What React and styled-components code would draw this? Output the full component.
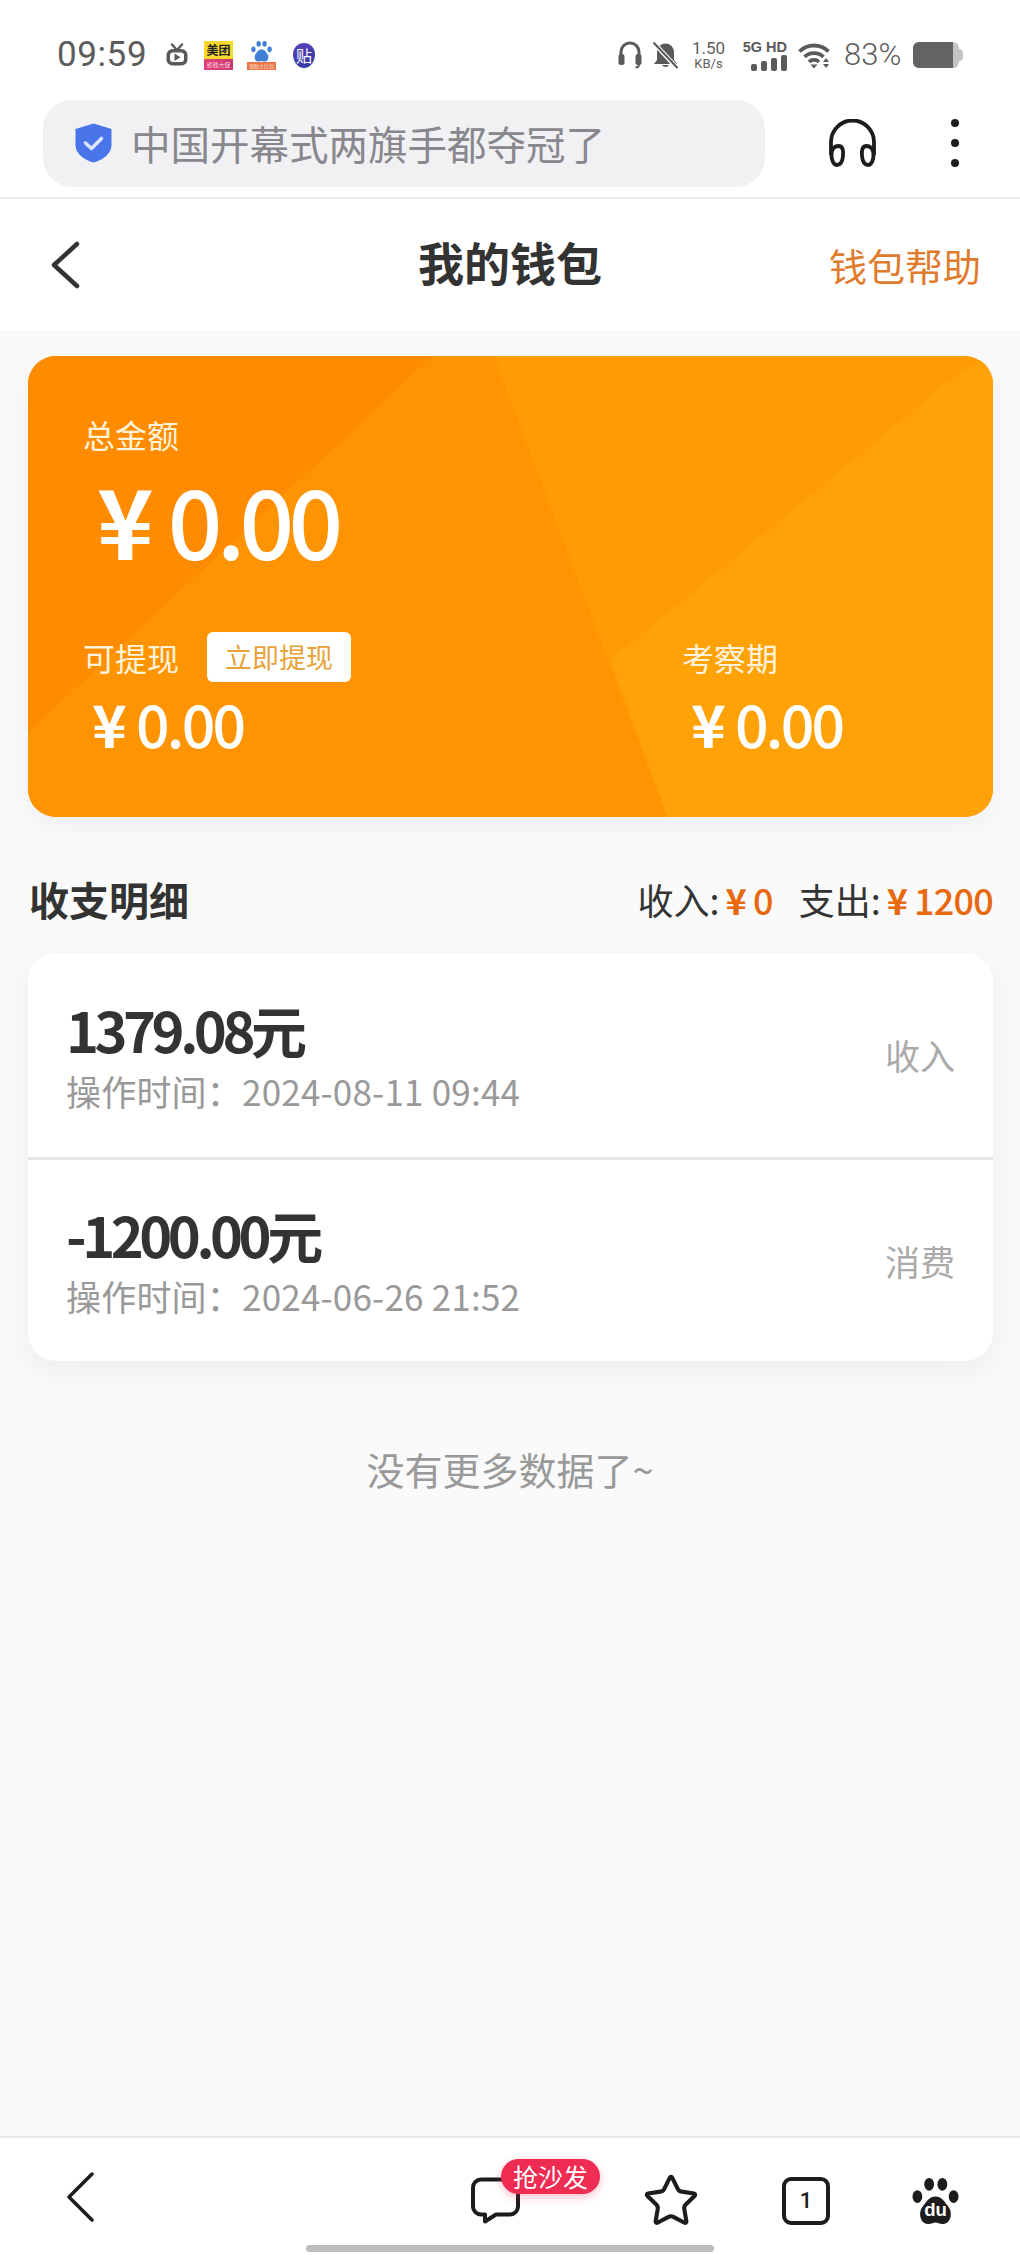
import React from 'react';
import styled, { createGlobalStyle } from 'styled-components';
import { Star } from 'lucide-react';

const GlobalStyle = createGlobalStyle`
  html, body { margin: 0; padding: 0; background: #fafafa; }
  * { box-sizing: border-box; }
  body { font-family: "Noto Sans CJK SC", "Noto Sans", sans-serif; }
`;

const records = [
  { amount: '1379.08元', time: '操作时间：2024-08-11 09:44', kind: '收入' },
  { amount: '-1200.00元', time: '操作时间：2024-06-26 21:52', kind: '消费' },
];

const App = () => (
  <Page>
    <GlobalStyle />
    <StatusBar>
      <StatusGroup>
        <Clock>09:59</Clock>
        <TvIcon />
        <MeituanBadge>
          <span>美团</span>
          <i>省钱大促</i>
        </MeituanBadge>
        <BaiduBadge>
          <PawIcon size={21} color="#3f7fd6" />
          <i>领取大红包</i>
        </BaiduBadge>
        <TiebaBadge>贴</TiebaBadge>
      </StatusGroup>
      <StatusGroup>
        <HeadsetIcon />
        <MutedBell />
        <Speed>
          <b>1.50</b>
          <small>KB/s</small>
        </Speed>
        <Network>
          <b>5G HD</b>
          <SignalBars>
            {[7, 10, 13, 16].map((h, i) => (
              <SignalBar key={i} $h={h} />
            ))}
          </SignalBars>
        </Network>
        <WifiIcon />
        <Percent>83%</Percent>
        <Battery>
          <BatteryBody>
            <BatteryLevel />
          </BatteryBody>
          <BatteryNub />
        </Battery>
      </StatusGroup>
    </StatusBar>

    <Toolbar>
      <SearchPill>
        <ShieldIcon />
        <SearchText>中国开幕式两旗手都夺冠了</SearchText>
      </SearchPill>
      <BigHeadphones />
      <MoreDots>
        <span />
        <span />
        <span />
      </MoreDots>
    </Toolbar>

    <Header>
      <BackChevron />
      <Title>我的钱包</Title>
      <HelpLink>钱包帮助</HelpLink>
    </Header>

    <WalletCard>
      <CardShapes viewBox="0 0 965 461" preserveAspectRatio="none" aria-hidden="true">
        <polygon points="965,0 935,14 583,304 639,461 965,461" fill="#ffa207" />
        <polygon points="405,0 466,0 639,461 0,461 0,377" fill="#ff9402" />
        <polygon points="0,0 405,0 0,377" fill="#ff8c00" />
      </CardShapes>
      <CardBody>
        <CardLabel>总金额</CardLabel>
        <TotalAmount>
          <Yen $gap="20px">¥</Yen>0.00
        </TotalAmount>
        <CardColumns>
          <CardColumn $width="599px">
            <LabelRow>
              <CardLabel>可提现</CardLabel>
              <WithdrawButton>立即提现</WithdrawButton>
            </LabelRow>
            <SmallAmount>
              <Yen $gap="12px">¥</Yen>0.00
            </SmallAmount>
          </CardColumn>
          <CardColumn>
            <LabelRow>
              <CardLabel>考察期</CardLabel>
            </LabelRow>
            <SmallAmount>
              <Yen $gap="12px">¥</Yen>0.00
            </SmallAmount>
          </CardColumn>
        </CardColumns>
      </CardBody>
    </WalletCard>

    <SectionHead>
      <SectionTitle>收支明细</SectionTitle>
      <Totals>
        <span>收入:</span>
        <Money>
          <Yen $gap="7px">¥</Yen>0
        </Money>
        <TotalGap />
        <span>支出:</span>
        <Money>
          <Yen $gap="7px">¥</Yen>1200
        </Money>
      </Totals>
    </SectionHead>

    <RecordList>
      {records.map((r) => (
        <RecordRow key={r.time}>
          <div>
            <RecordAmount>{r.amount}</RecordAmount>
            <RecordTime>{r.time}</RecordTime>
          </div>
          <RecordKind>{r.kind}</RecordKind>
        </RecordRow>
      ))}
    </RecordList>

    <NoMore>没有更多数据了~</NoMore>

    <BottomBar>
      <BottomBack />
      <BottomIcons>
        <CommentWrap>
          <BubbleIcon />
          <SofaBadge>抢沙发</SofaBadge>
        </CommentWrap>
        <Star size={58} strokeWidth={1.7} color="#1c1c1c" />
        <TabCount>1</TabCount>
        <PawIcon size={47} color="#1c1c1c" du />
      </BottomIcons>
      <HomeIndicator />
    </BottomBar>
  </Page>
);

const TvIcon = () => (
  <TvSvg viewBox="0 0 24 24">
    <path d="M7 1.500l4 4.500M17 1.500l-4 4.500" stroke="#5a5a5a" strokeWidth="2.400" strokeLinecap="round" fill="none" />
    <rect x="1.500" y="6" width="21" height="16.500" rx="6" fill="#5a5a5a" />
    <rect x="5" y="9.500" width="14" height="9.500" rx="3" fill="#fff" />
    <path d="M9.500 10.600l6 3.700-6 3.700z" fill="#5a5a5a" />
  </TvSvg>
);

const HeadsetIcon = () => (
  <HeadsetSvg viewBox="0 0 24 28">
    <path d="M3 16v-5a9 9 0 0 1 18 0v5" stroke="#5a5a5a" strokeWidth="3" fill="none" />
    <rect x="0.500" y="13" width="6" height="11" rx="2.500" fill="#5a5a5a" />
    <rect x="17.500" y="13" width="6" height="11" rx="2.500" fill="#5a5a5a" />
    <path d="M21 23c0 2.500-1 3.500-3.500 3.500" stroke="#5a5a5a" strokeWidth="2" fill="none" />
  </HeadsetSvg>
);

const MutedBell = () => (
  <BellSvg viewBox="0 0 26 28">
    <path d="M5 11a8.500 8.500 0 0 1 17 0v8l3 4H2l3-4z" fill="#5a5a5a" />
    <path d="M10 24a4 4 0 0 0 7 0z" fill="#5a5a5a" />
    <path d="M1 1l24 26" stroke="#fff" strokeWidth="4.500" />
    <path d="M1.500 1.500l24 25.500" stroke="#5a5a5a" strokeWidth="2" />
  </BellSvg>
);

const WifiIcon = () => (
  <WifiSvg viewBox="0 0 34 28">
    <g fill="none" stroke="#5a5a5a" strokeWidth="3.800">
      <path d="M1.500 10.500c8-8 21-8 29 0" />
      <path d="M6.500 15.800c5.200-5 13.800-5 19 0" />
      <path d="M11 20.800c2.800-2.600 7.200-2.600 10 0" />
    </g>
    <path d="M12.500 23.500h7L16 27.500z" fill="#5a5a5a" />
    <path d="M28 17l3 4h-6zM28 27l3-4h-6z" fill="#5a5a5a" />
  </WifiSvg>
);

const ShieldIcon = () => (
  <ShieldSvg viewBox="0 0 37 40">
    <path d="M18.500 0.500L36.500 6v16c0 9-9 15-18 17.500C9.500 37 0.500 31 0.500 22V6z" fill="#4a75ea" />
    <path d="M10.500 20l6 5.500 10-10" stroke="#dbe5ff" strokeWidth="3.600" fill="none" strokeLinecap="round" strokeLinejoin="round" />
  </ShieldSvg>
);

const BigHeadphones = () => (
  <HeadphonesSvg viewBox="0 0 49 48">
    <path d="M3 36V23a21.500 21.500 0 0 1 43 0v13" stroke="#1c1c1c" strokeWidth="3.800" fill="none" />
    <path d="M3.500 36c0-5 2.500-9 7-9s5 5 4.500 10-2.500 9-6 9-5.500-5-5.500-10z" stroke="#1c1c1c" strokeWidth="3.800" fill="none" />
    <path d="M45.500 36c0-5-2.500-9-7-9s-5 5-4.500 10 2.500 9 6 9 5.500-5 5.500-10z" stroke="#1c1c1c" strokeWidth="3.800" fill="none" />
  </HeadphonesSvg>
);

const BackChevron = () => (
  <BackSvg viewBox="0 0 30 48">
    <path d="M27 3L4 24l23 21" stroke="#333" strokeWidth="4.500" fill="none" strokeLinecap="round" strokeLinejoin="round" />
  </BackSvg>
);

const BottomBack = () => (
  <BottomBackSvg viewBox="0 0 28 50">
    <path d="M26 2L3 25l23 23" stroke="#1c1c1c" strokeWidth="3.500" fill="none" strokeLinecap="round" strokeLinejoin="round" />
  </BottomBackSvg>
);

const BubbleIcon = () => (
  <BubbleSvg viewBox="0 0 49 48">
    <path
      d="M10 2.500h29a8 8 0 0 1 8 8v19a8 8 0 0 1-8 8H25l-11 7v-7h-4a8 8 0 0 1-8-8v-19a8 8 0 0 1 8-8z"
      stroke="#1c1c1c"
      strokeWidth="4"
      strokeLinejoin="round"
      fill="none"
    />
  </BubbleSvg>
);

const PawIcon = ({ size, color, du }) => (
  <svg width={size} height={size} viewBox="0 0 48 48" style={{ flex: 'none' }}>
    <ellipse cx="17.500" cy="6.500" rx="5" ry="6.500" fill={color} />
    <ellipse cx="31" cy="6.500" rx="5" ry="6.500" fill={color} />
    <ellipse cx="5.500" cy="19" rx="5" ry="6.500" fill={color} />
    <ellipse cx="42.500" cy="19" rx="5" ry="6.500" fill={color} />
    <path d="M24 19c6 0 9 5 13 10 5 6 3 18-6 18-3 0-5-1.500-7-1.500S20 47 17 47C8 47 6 35 11 29c4-5 7-10 13-10z" fill={color} />
    {du && (
      <text x="24" y="39" textAnchor="middle" fontSize="19" fontWeight="700" fill="#fff" fontFamily="Liberation Sans, sans-serif">
        du
      </text>
    )}
  </svg>
);

const Page = styled.div`
  width: 1020px;
  height: 2255px;
  display: flex;
  flex-direction: column;
  background: #fafafa;
  overflow: hidden;
`;

const StatusBar = styled.div`
  height: 100px;
  padding: 37px 57px 0 57px;
  display: flex;
  justify-content: space-between;
  align-items: flex-start;
  background: #fff;
`;

const StatusGroup = styled.div`
  display: flex;
  align-items: center;
  height: 36px;
`;

const Clock = styled.div`
  font-family: Roboto, sans-serif;
  font-size: 35px;
  line-height: 36px;
  letter-spacing: 0.6px;
  color: #5c5c5c;
  width: 108px;
`;

const TvSvg = styled.svg`
  width: 24px;
  height: 24px;
  margin-right: 15px;
`;

const MeituanBadge = styled.div`
  width: 29px;
  height: 29px;
  margin-right: 14px;
  display: flex;
  flex-direction: column;
  overflow: hidden;
  background: #f8d92e;
  span {
    height: 18px;
    font-size: 12px;
    line-height: 18px;
    font-weight: 700;
    text-align: center;
    color: #222;
    white-space: nowrap;
  }
  i {
    flex: 1;
    background: linear-gradient(90deg, #e2417a, #c83a70);
    font-size: 6px;
    line-height: 11px;
    font-style: normal;
    text-align: center;
    color: #ffd9e0;
    white-space: nowrap;
    overflow: hidden;
  }
`;

const BaiduBadge = styled.div`
  width: 29px;
  height: 29px;
  margin-right: 17px;
  display: flex;
  flex-direction: column;
  align-items: center;
  justify-content: space-between;
  i {
    width: 29px;
    height: 8px;
    background: #e8764a;
    font-size: 5px;
    line-height: 8px;
    font-style: normal;
    text-align: center;
    color: #ffe6d8;
    white-space: nowrap;
    overflow: hidden;
  }
`;

const TiebaBadge = styled.div`
  width: 22px;
  height: 25px;
  border-radius: 11px 11px 11px 11px / 11px 11px 14px 14px;
  background: linear-gradient(160deg, #5b3fc0, #2d3c9a);
  color: #fff;
  font-size: 16px;
  line-height: 24px;
  text-align: center;
`;

const HeadsetSvg = styled.svg`
  width: 24px;
  height: 28px;
  margin-right: 10px;
`;

const BellSvg = styled.svg`
  width: 26px;
  height: 28px;
  margin-right: 13px;
`;

const Speed = styled.div`
  width: 35px;
  margin-right: 14px;
  display: flex;
  flex-direction: column;
  align-items: center;
  font-family: Roboto, sans-serif;
  color: #5c5c5c;
  b {
    font-size: 17px;
    line-height: 17px;
    font-weight: 400;
  }
  small {
    font-size: 13px;
    line-height: 13px;
  }
`;

const Network = styled.div`
  width: 47px;
  margin-right: 11px;
  display: flex;
  flex-direction: column;
  align-items: flex-end;
  font-family: "Liberation Sans", sans-serif;
  color: #5a5a5a;
  b {
    font-size: 14.500px;
    line-height: 16px;
    white-space: nowrap;
  }
`;

const SignalBars = styled.div`
  display: flex;
  align-items: flex-end;
  gap: 4px;
  height: 16px;
`;

const SignalBar = styled.div`
  width: 6px;
  height: ${(p) => p.$h}px;
  border-radius: 2px;
  background: #5a5a5a;
`;

const WifiSvg = styled.svg`
  width: 34px;
  height: 28px;
  margin-right: 12px;
`;

const Percent = styled.div`
  font-family: Roboto, sans-serif;
  font-weight: 300;
  font-size: 31px;
  line-height: 36px;
  color: #5c5c5c;
  width: 69px;
`;

const Battery = styled.div`
  display: flex;
  align-items: center;
  width: 50px;
`;

const BatteryBody = styled.div`
  width: 46px;
  height: 26px;
  border-radius: 6px;
  background: #c4c4c4;
  overflow: hidden;
`;

const BatteryLevel = styled.div`
  width: 40px;
  height: 100%;
  background: #636363;
`;

const BatteryNub = styled.div`
  width: 4px;
  height: 12px;
  border-radius: 0 4px 4px 0;
  background: #c4c4c4;
`;

const Toolbar = styled.div`
  height: 99px;
  padding: 0 0 11px 43px;
  display: flex;
  align-items: center;
  background: #fff;
  border-bottom: 2px solid #ededed;
`;

const SearchPill = styled.div`
  width: 722px;
  height: 87px;
  border-radius: 29px;
  background: #f1f1f3;
  padding-left: 32px;
  display: flex;
  align-items: center;
  gap: 19px;
`;

const ShieldSvg = styled.svg`
  width: 37px;
  height: 40px;
  flex: none;
`;

const SearchText = styled.div`
  font-size: 39.500px;
  line-height: 50px;
  color: #87878d;
  white-space: nowrap;
`;

const HeadphonesSvg = styled.svg`
  width: 49px;
  height: 48px;
  margin-left: 63px;
`;

const MoreDots = styled.div`
  margin-left: 74px;
  display: flex;
  flex-direction: column;
  gap: 12px;
  span {
    width: 8px;
    height: 8px;
    border-radius: 50%;
    background: #1c1c1c;
  }
`;

const Header = styled.div`
  position: relative;
  height: 131px;
  background: #fff;
  padding: 0 39px 0 50px;
  display: flex;
  align-items: center;
  justify-content: space-between;
`;

const BackSvg = styled.svg`
  width: 30px;
  height: 48px;
`;

const Title = styled.div`
  position: absolute;
  left: 0;
  right: 0;
  top: 32px;
  text-align: center;
  font-size: 46px;
  line-height: 60px;
  font-weight: 700;
  color: #333;
`;

const HelpLink = styled.div`
  font-size: 38px;
  line-height: 50px;
  color: #e07a2c;
`;

const WalletCard = styled.div`
  position: relative;
  flex: none;
  margin: 26px 27px 0 28px;
  height: 461px;
  border-radius: 28px;
  overflow: hidden;
  background: #ff9c04;
  box-shadow: 0 10px 24px rgba(120, 130, 160, 0.08);
`;

const CardShapes = styled.svg`
  position: absolute;
  inset: 0;
  width: 100%;
  height: 100%;
`;

const CardBody = styled.div`
  position: relative;
  padding: 56px 0 0 55px;
  display: flex;
  flex-direction: column;
  color: #fff;
`;

const CardLabel = styled.div`
  font-size: 32px;
  line-height: 44px;
  color: #fff3dc;
`;

const TotalAmount = styled.div`
  margin: 7px 0 0 14px;
  font-size: 96px;
  line-height: 112px;
  font-weight: 500;
  letter-spacing: -5.800px;
`;

const Yen = styled.span`
  margin-right: ${(p) => p.$gap};
  font-weight: 700;
`;

const CardColumns = styled.div`
  margin-top: 57px;
  display: flex;
`;

const CardColumn = styled.div`
  width: ${(p) => p.$width || 'auto'};
`;

const LabelRow = styled.div`
  height: 50px;
  display: flex;
  align-items: center;
  gap: 28px;
`;

const WithdrawButton = styled.div`
  width: 144px;
  height: 50px;
  border-radius: 6px;
  background: #fff;
  color: #e8a238;
  font-size: 27px;
  line-height: 50px;
  text-align: center;
`;

const SmallAmount = styled.div`
  margin: 6px 0 0 9px;
  font-size: 59px;
  line-height: 70px;
  font-weight: 500;
  letter-spacing: -2.800px;
`;

const SectionHead = styled.div`
  margin: 54px 27px 0 29px;
  height: 56px;
  display: flex;
  align-items: center;
  justify-content: space-between;
`;

const SectionTitle = styled.div`
  font-size: 40px;
  line-height: 56px;
  font-weight: 700;
  color: #333;
`;

const Totals = styled.div`
  display: flex;
  align-items: center;
  font-size: 36px;
  line-height: 50px;
  color: #333;
`;

const Money = styled.span`
  margin-left: 6px;
  color: #e8690f;
  font-weight: 500;
  letter-spacing: -0.800px;
`;

const TotalGap = styled.span`
  width: 26px;
`;

const RecordList = styled.div`
  flex: none;
  margin: 26px 27px 0 28px;
  height: 408px;
  border-radius: 28px;
  background: #fff;
  box-shadow: 0 10px 28px rgba(120, 130, 160, 0.1);
  overflow: hidden;
`;

const RecordRow = styled.div`
  height: 204px;
  padding: 0 38px;
  display: flex;
  justify-content: space-between;
  align-items: center;
  & + & {
    border-top: 3px solid #e6e6e6;
  }
`;

const RecordAmount = styled.div`
  font-size: 56px;
  line-height: 68px;
  font-weight: 700;
  color: #333;
  letter-spacing: -4.500px;
`;

const RecordTime = styled.div`
  margin-top: 3px;
  font-size: 35px;
  line-height: 50px;
  color: #999;
  letter-spacing: 0.200px;
`;

const RecordKind = styled.div`
  font-size: 35px;
  line-height: 50px;
  color: #aaa;
`;

const NoMore = styled.div`
  margin-top: 83px;
  text-align: center;
  font-size: 38px;
  line-height: 50px;
  color: #999;
`;

const BottomBar = styled.div`
  position: relative;
  margin-top: auto;
  height: 119px;
  padding: 34px 61px 0 66px;
  display: flex;
  justify-content: space-between;
  align-items: flex-start;
  background: #fff;
  border-top: 2px solid #e8e8e8;
`;

const BottomBackSvg = styled.svg`
  width: 28px;
  height: 50px;
`;

const BottomIcons = styled.div`
  display: flex;
  align-items: center;
  gap: 82px;
`;

const CommentWrap = styled.div`
  position: relative;
  width: 49px;
  height: 48px;
  margin-right: 40px;
`;

const BubbleSvg = styled.svg`
  width: 49px;
  height: 48px;
  display: block;
`;

const SofaBadge = styled.div`
  position: absolute;
  left: 30px;
  top: -18px;
  width: 99px;
  height: 35px;
  border-radius: 18px;
  background: #ef2c52;
  box-shadow: 0 3px 8px rgba(239, 44, 82, 0.3);
  color: #fff;
  font-size: 25px;
  line-height: 34px;
  text-align: center;
`;

const TabCount = styled.div`
  width: 48px;
  height: 48px;
  border: 4px solid #1c1c1c;
  border-radius: 9px;
  font-family: Roboto, sans-serif;
  font-size: 22px;
  font-weight: 500;
  line-height: 40px;
  text-align: center;
  color: #1c1c1c;
`;

const HomeIndicator = styled.div`
  position: absolute;
  left: 306px;
  bottom: 3px;
  width: 408px;
  height: 7px;
  border-radius: 4px;
  background: #bdbdbd;
`;

export default App;
